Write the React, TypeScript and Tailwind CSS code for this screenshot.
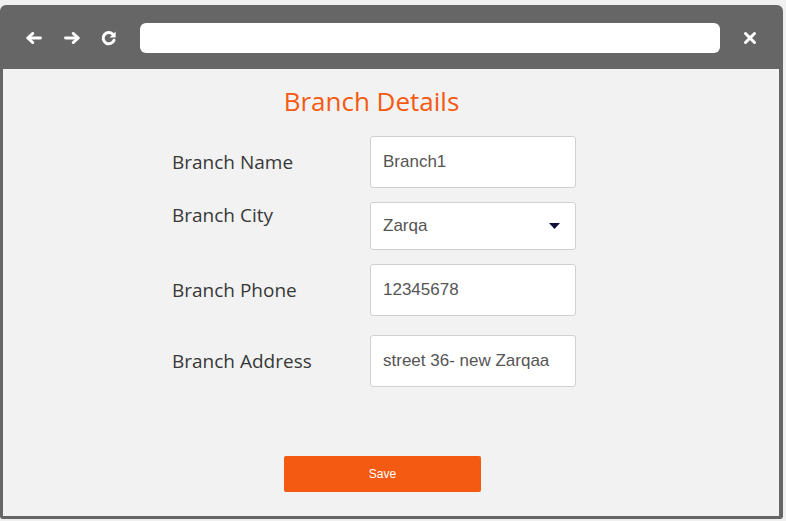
import React from "react";

const BackIcon = () => (
  <svg width="16" height="12" viewBox="0 0 16 12" fill="none" stroke="white" strokeWidth="2.8" strokeLinecap="round" strokeLinejoin="round">
    <path d="M14.5 6H2" />
    <path d="M6.8 1.4L1.8 6l5 4.6" />
  </svg>
);

const ForwardIcon = () => (
  <svg width="16" height="12" viewBox="0 0 16 12" fill="none" stroke="white" strokeWidth="2.8" strokeLinecap="round" strokeLinejoin="round">
    <path d="M1.5 6H14" />
    <path d="M9.2 1.4l5 4.6-5 4.6" />
  </svg>
);

const RefreshIcon = () => (
  <svg width="16" height="16" viewBox="0 0 16 16" fill="none">
    <path d="M13 10.2A5.6 5.6 0 1 1 11.8 4.3" stroke="white" strokeWidth="3" strokeLinecap="round" />
    <path d="M14.6 1.4v6H8.6z" fill="white" />
  </svg>
);

const CloseIcon = () => (
  <svg width="14" height="14" viewBox="0 0 14 14" fill="none" stroke="white" strokeWidth="3" strokeLinecap="round">
    <path d="M2.5 2.5l9 9M11.5 2.5l-9 9" />
  </svg>
);

const labelCls = "w-[198px] shrink-0 font-['Open_Sans'] text-[19px] leading-[26px] text-[#383838]";
const boxCls =
  "w-[206px] rounded-[3px] border border-[#d0d0d0] bg-white px-[12px] font-['Liberation_Sans'] text-[17px] text-[#555555] outline-none";

export default function App() {
  return (
    <div className="h-[521px] w-[786px] overflow-hidden bg-[#f0f0f0] pt-[5px]">
      <div className="flex h-[514px] w-[783px] flex-col rounded-t-[6px] rounded-b-[3px] bg-[#666666]">
        {/* browser chrome */}
        <div className="flex h-[64px] shrink-0 items-center pt-[2px] pl-[26px]">
          <BackIcon />
          <div className="ml-[22px]">
            <ForwardIcon />
          </div>
          <div className="ml-[21px]">
            <RefreshIcon />
          </div>
          <div className="ml-[23px] h-[30px] w-[580px] rounded-[6px] bg-white" />
          <div className="ml-[23px]">
            <CloseIcon />
          </div>
        </div>

        {/* page */}
        <div className="mb-[3px] ml-[3px] mr-[4px] flex-1 bg-[#f2f2f2] pt-[14px]">
          <div className="ml-[169px] w-[404px]">
            <h1 className="pr-[5px] text-center font-['Open_Sans'] text-[26px] leading-[36px] text-[#f55a12]">
              Branch Details
            </h1>

            <div className="mt-[17px] flex flex-col">
              <div className="flex items-center">
                <span className={labelCls}>Branch Name</span>
                <input readOnly defaultValue="Branch1" className={`${boxCls} h-[52px]`} />
              </div>

              <div className="mt-[14px] flex items-start">
                <span className={labelCls}>Branch City</span>
                <div className={`${boxCls} flex h-[48px] items-center justify-between pr-[15px]`}>
                  <span>Zarqa</span>
                  <svg width="11" height="6" viewBox="0 0 11 6">
                    <path d="M0 0h11L5.5 6z" fill="#0f0f3d" />
                  </svg>
                </div>
              </div>

              <div className="mt-[14px] flex items-center">
                <span className={labelCls}>Branch Phone</span>
                <input readOnly defaultValue="12345678" className={`${boxCls} h-[52px]`} />
              </div>

              <div className="mt-[19px] flex items-center">
                <span className={labelCls}>Branch Address</span>
                <input readOnly defaultValue="street 36- new Zarqaa" className={`${boxCls} h-[52px]`} />
              </div>
            </div>

            <button className="ml-[112px] mt-[69px] h-[36px] w-[197px] rounded-[2px] bg-[#f55a12] font-['Liberation_Sans'] text-[12px] text-white">
              Save
            </button>
          </div>
        </div>
      </div>
    </div>
  );
}
